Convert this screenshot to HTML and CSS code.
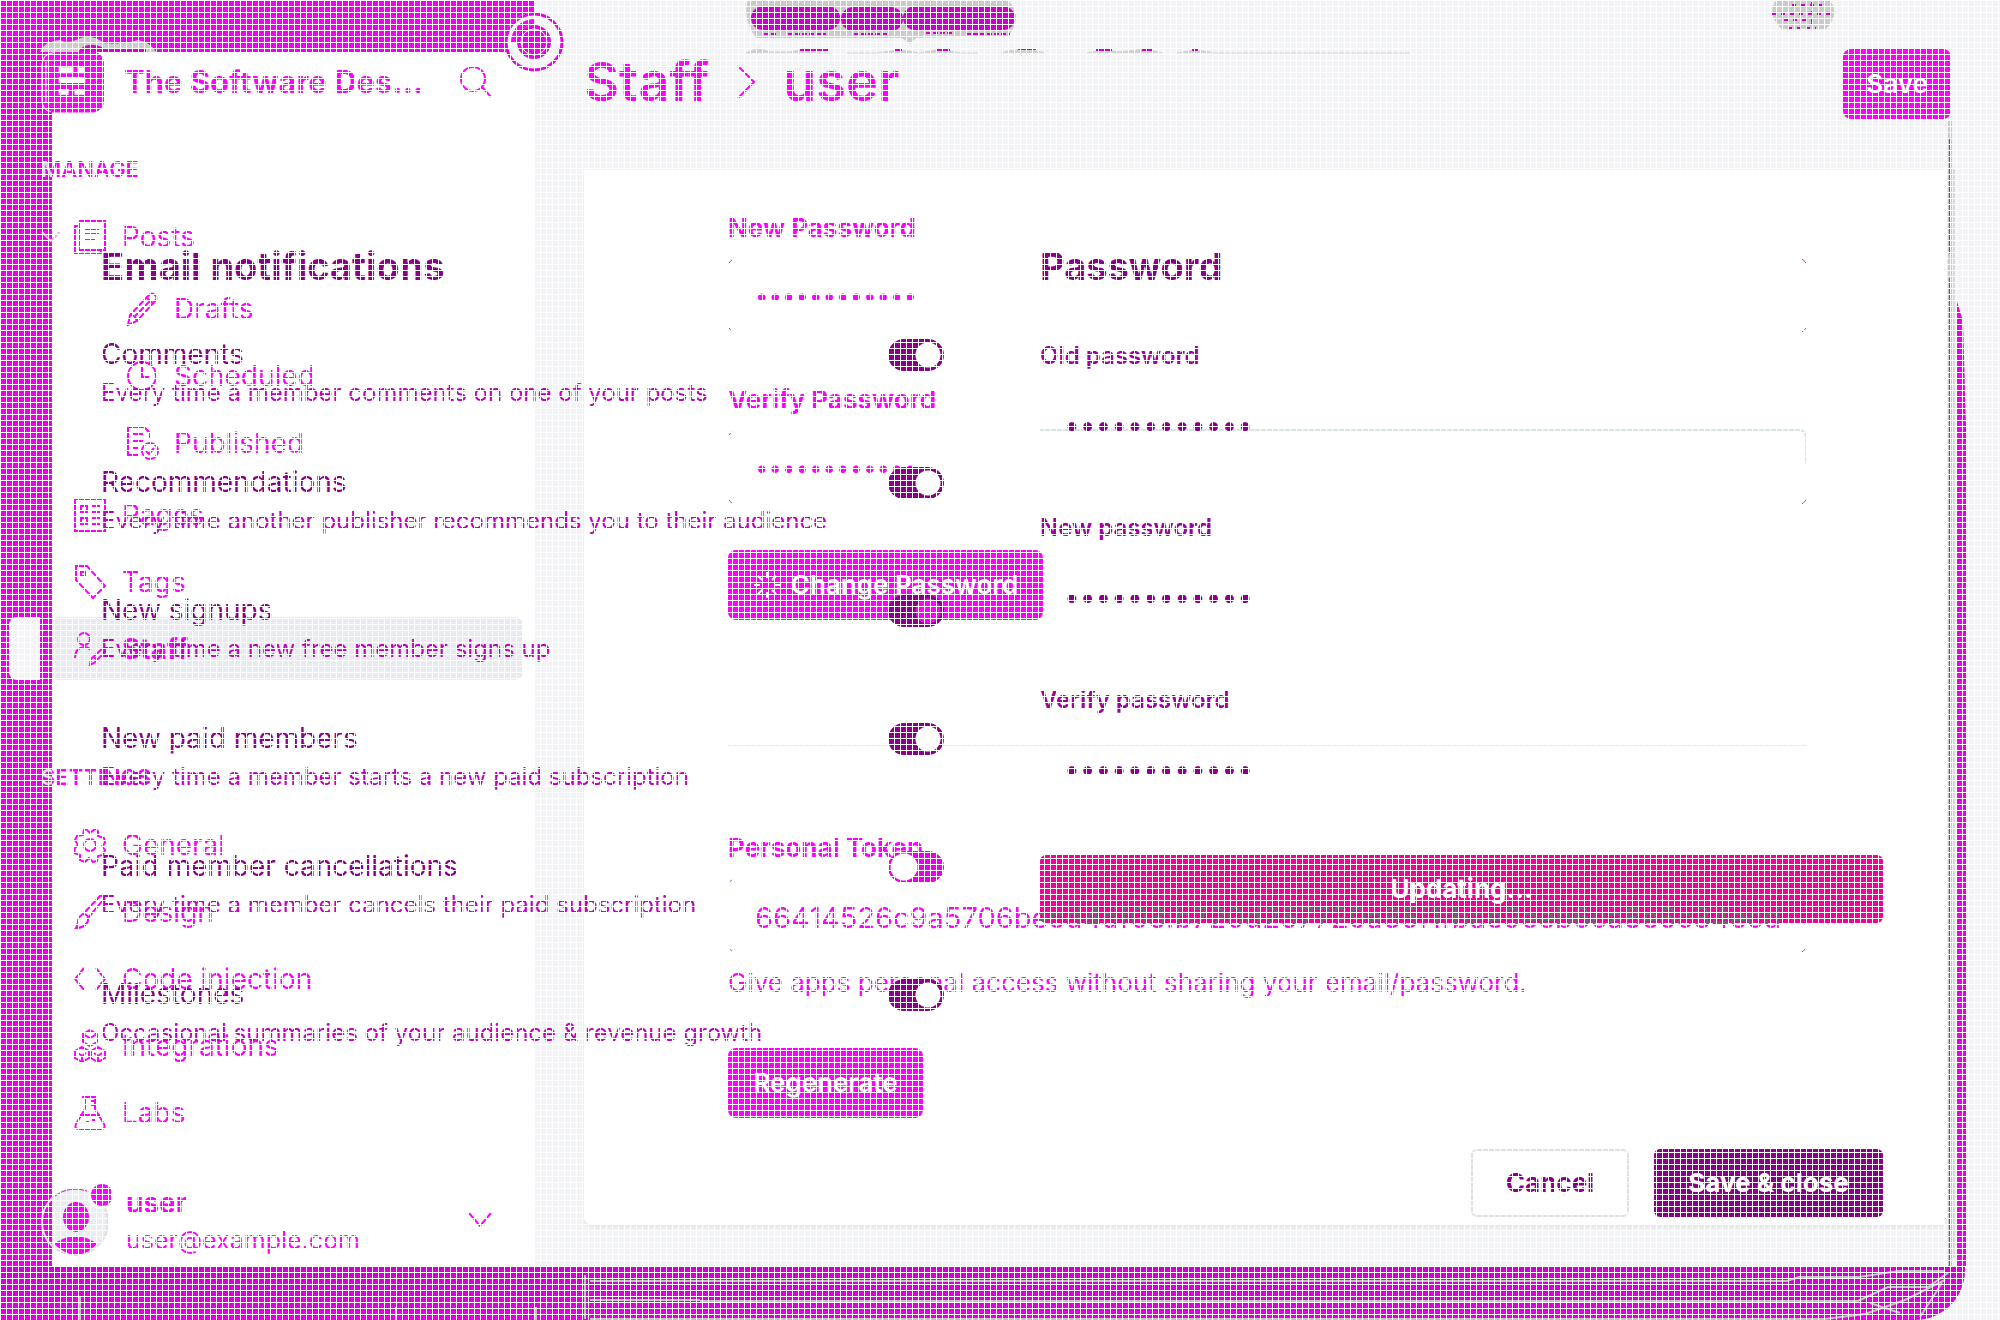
FILE: index.html
```html
<!DOCTYPE html>
<html lang="en">
<head>
<meta charset="utf-8">
<title>Staff - user</title>
<link rel="stylesheet" href="styles.css">
</head>
<body>
<div class="page">
  <aside class="sidebar">
    <header class="brand">
      <svg class="logo" viewBox="0 0 64 62"><rect width="64" height="62" rx="12" fill="#f0f"/><path d="M14 1Q1 2 1 14v34q0 12 9 13M5 10v42" stroke="#fff"/><path d="M18 19h15M37 19h7M18 29h27M18 41h10M34 41h10" stroke="#fff" stroke-width="6"/></svg>
      <strong class="brand-name">The Software Des...</strong>
      <button class="plain" aria-label="Search"><svg class="search" viewBox="0 0 32 32"><circle cx="13" cy="13" r="12"/><path d="M22 21l9 10"/></svg></button>
    </header>
    <h2 class="group">MANAGE</h2>
    <nav class="nav">
      <a href="#" class="item"><svg class="caret" viewBox="0 0 20 12"><path d="M1 1l9 9 9-9"/></svg><svg class="icon" viewBox="0 0 32 34"><path d="M5 1h26v29H5zM5 6H1v27h26v-3M10 9h15M10 14h15M10 20h11"/></svg>Posts</a>
      <div class="sub">
        <a href="#" class="item"><svg class="icon" viewBox="0 0 32 34"><path d="M3 23L22 3q3-3 6 0t0 6L10 29l-9 4zM3 23q5 0 7 6M20 6l7 6M8 24L24 8"/></svg>Drafts</a>
        <a href="#" class="item"><svg class="icon" viewBox="0 0 32 34"><circle cx="15" cy="17" r="14"/><path d="M15 8v10h7"/></svg>Scheduled</a>
        <a href="#" class="item"><svg class="icon" viewBox="0 0 32 34"><path d="M11 29H1V1h16l6 6v6M5 8h11M5 15h11M5 22h6"/><circle cx="23" cy="25" r="8"/><path d="M19 25l3 3 5-6"/></svg>Published</a>
      </div>
      <a href="#" class="item"><svg class="icon" viewBox="0 0 32 34"><path d="M1 1h30v32H1zM7 8h6v6H7zM18 8h8M18 14h8M7 20h6v6H7zM18 20h8M18 26h8"/></svg>Pages</a>
      <a href="#" class="item"><svg class="icon" viewBox="0 0 32 34"><path d="M2 1h11l18 20-12 12L2 15zM7 7h4v4H7z"/></svg>Tags</a>
      <a href="#" class="item active"><svg class="icon" viewBox="0 0 32 34"><circle cx="10" cy="7" r="6"/><path d="M1 26q0-10 9-11 4 0 7 3M16 33l1-6 12-11 3 3-12 12zM20 25l3 3"/></svg>Staff</a>
    </nav>
    <h2 class="group settings">SETTINGS</h2>
    <nav class="nav">
      <a href="#" class="item"><svg class="icon" viewBox="0 0 32 34"><circle cx="16" cy="17" r="6"/><path d="M12 1l4 4 5-4 3 2v5l6 2 1 5-3 3 3 4-2 5-5 1-1 5-4 1-4-4-4 4-5-2v-5l-6-2 1-5 3-3-3-5 2-4 6-1 1-5z"/></svg>General</a>
      <a href="#" class="item"><svg class="icon" viewBox="0 0 32 34"><path d="M9 19L26 1h4v3L14 23M9 19q6 0 5 7-3 7-12 7 2-3 2-7t5-7"/></svg>Design</a>
      <a href="#" class="item"><svg class="icon" viewBox="0 0 32 34"><path d="M10 6L1 17l9 11M22 6l9 11-9 11"/></svg>Code injection</a>
      <a href="#" class="item"><svg class="icon" viewBox="0 0 32 34"><path d="M16 1l7 4v8l-7 4-7-4V5zM9 5l7 4 7-4M8 18l7 4v7l-7 4-7-4v-7zM24 18l7 4v7l-7 4-7-4v-7zM4 24l4 3 4-3M8 27v6M20 24l4 3 4-3M24 27v6"/></svg>Integrations</a>
      <a href="#" class="item"><svg class="icon" viewBox="0 0 32 34"><path d="M8 1h15M11 1v12L2 28q-2 5 3 5h22q5 0 3-5l-9-15V1M6 19h20M16 5h5M16 9h5M12 26h3M18 24h3"/></svg>Labs</a>
    </nav>
    <footer class="account">
      <svg class="avatar" viewBox="0 0 70 72"><circle cx="34" cy="38" r="33" fill="#e8ecf3"/><path d="M11 14a33 33 0 0 0 0 48z" fill="#e800e8"/><circle cx="34" cy="38" r="33" stroke="#ddd" stroke-width="2"/><path d="M14 12a33 33 0 0 1 32-5" stroke="#f0f"/><ellipse cx="35" cy="33" rx="13" ry="15" fill="#f0f"/><path d="M13 60q22-16 43 0-20 22-43 0z" fill="#f0f"/><circle cx="60" cy="12" r="13" fill="#fff"/><circle cx="61" cy="11" r="11" fill="#f0f"/></svg>
      <div class="who"><strong>user</strong><span>user@example.com</span></div>
      <button class="plain" aria-label="Account menu"><svg class="down" viewBox="0 0 24 16"><path d="M1 1l11 13L23 1"/></svg></button>
    </footer>
    <svg class="ring" viewBox="0 0 60 60"><circle cx="30" cy="30" r="28" fill="#f3f4f7" stroke="#fff" stroke-width="3"/><path d="M7 30a23 23 0 0 1 23-23v6a17 17 0 0 0-17 17z" fill="#f0f"/><circle cx="30" cy="30" r="28" stroke="#e800e8" stroke-width="3"/><circle cx="30" cy="30" r="17" fill="#e800e8"/><circle cx="30" cy="30" r="13" stroke="#fff"/></svg>
    <svg class="puff" viewBox="0 0 116 16"><path d="M0 16Q4 5 20 4 26 8 36 4 50-4 64 7 82 9 98 4q12 2 18 12z" fill="#ccc"/><path d="M38 16q8-12 26-4h42v4z" fill="#d400d4"/></svg>
  </aside>

  <main class="main">
    <header class="topbar">
      <h1 class="crumbs"><a href="#">Staff</a><svg class="sep" viewBox="0 0 18 34"><path d="M1 1l16 16L1 33"/></svg><span>user</span></h1>
      <button class="button save">Save</button>
    </header>
    <form class="card">
      <label for="np">New Password</label>
      <div class="field"><input id="np" type="password" value="abcdefghijkl"></div>
      <label class="next" for="vp">Verify Password</label>
      <div class="field lined"><input id="vp" type="password" value="abcdefghijkl"></div>
      <button type="button" class="button change"><svg class="spin" viewBox="0 0 28 28"><path d="M14 1v6M14 21v6M1 14h6M21 14h6M5 5l4 4M19 19l4 4M5 23l4-4M19 9l4-4"/></svg>Change Password</button>
      <hr>
      <label for="token">Personal Token</label>
      <div class="field token"><input id="token" type="text" value="66414526c9a5706becd4df08:b720d257729a85f1fbae9eeb6ca8e6c34ecd"></div>
      <p class="help">Give apps personal access without sharing your email/password.</p>
      <button type="button" class="button regen">Regenerate</button>
    </form>
  </main>
  <div class="floor"><svg class="cracks" viewBox="0 0 1965 53" preserveAspectRatio="none"><path d="M590 14H1787l12-4h60l40-6h45M590 33H700M700 34H1768h90l30-14h40l20-14M590 52H1825l40-5 40-14 40-20M585 8v44M536 40v13M80 30v23M1870 36l30 10M1920 50l22-34M396 40v13"/></svg></div>
</div>

<svg class="edge" viewBox="0 0 18 1200" preserveAspectRatio="none"><path d="M2 0V1200" stroke="#c8c8c8" stroke-width="4"/><path d="M2 20V140M2 165V1200" stroke="#e800e8" stroke-width="2"/><path d="M6 50V1190" stroke="#d8d8d8" stroke-width="2"/><path d="M9 190l6 20 3 110V1200H8z" fill="#e800e8"/></svg>
<svg class="smear" viewBox="0 0 664 54"><path d="M2 0h260q16 18 0 36l-92 2-6 6-8-6H10Q-4 18 2 0z" fill="#cacaca"/><rect x="5" y="6" width="89" height="24" rx="12" fill="#c0c"/><rect x="95" y="7" width="62" height="24" rx="12" fill="#c0c"/><rect x="157" y="6" width="112" height="24" rx="12" fill="#c0c"/><path d="M18 34h14M42 34h38M108 34h34M180 33h26M220 34h44" stroke="#d000d0" stroke-width="2" stroke-dasharray="5 2"/><path d="M0 53l12-5 12 4h20l14-3 16 4h10M100 53h30l24-3 20 3 20-4 20 4h18M255 53q20-7 44 0M340 53l20-3 12 2 28-3 16 4M430 53l20-3 20 3h194" fill="#d0d0d0" stroke="#d0d0d0"/><path d="M54 50h28M148 50h8M190 50h14M272 49h18M350 50h16M396 50h10M446 50h6" stroke="#d000d0" stroke-width="2"/></svg>
<svg class="smudge" viewBox="0 0 62 30"><path d="M4 0h54q10 15-4 29H10Q-6 15 4 0z" fill="#cacaca"/><path d="M0 14h62M12 20h28M20 5h30M16 28h28M40 2v22" stroke="#d000d0" stroke-width="2" stroke-dasharray="4 5"/></svg>

<section class="modal">
  <div class="column">
    <h2>Email notifications</h2>
    <label class="row"><span><b>Comments</b><small>Every time a member comments on one of your posts</small></span><input type="checkbox" checked></label>
    <label class="row"><span><b>Recommendations</b><small>Every time another publisher recommends you to their audience</small></span><input type="checkbox" checked></label>
    <label class="row"><span><b>New signups</b><small>Every time a new free member signs up</small></span><input class="through" type="checkbox" checked></label>
    <label class="row"><span><b>New paid members</b><small>Every time a member starts a new paid subscription</small></span><input type="checkbox" checked></label>
    <label class="row"><span><b>Paid member cancellations</b><small>Every time a member cancels their paid subscription</small></span><input type="checkbox"></label>
    <label class="row"><span><b>Milestones</b><small>Occasional summaries of your audience &amp; revenue growth</small></span><input type="checkbox" checked></label>
  </div>
  <form class="column">
    <h2>Password</h2>
    <label for="p1">Old password</label><input id="p1" type="password" value="abcdefghijkl">
    <label for="p2">New password</label><input id="p2" type="password" value="abcdefghijkl">
    <label for="p3">Verify password</label><input id="p3" type="password" value="abcdefghijkl">
    <button type="button" class="updating">Updating...</button>
    <div class="actions"><button type="button" class="cancel">Cancel</button><button type="button" class="close">Save &amp; close</button></div>
  </form>
</section>
<div class="mesh"></div>
</body>
</html>
```

FILE: styles.css
```css
* { box-sizing: border-box; }
body { margin: 0; position: relative; background: #f2f3f6; color: #f0f; font: 26px/30px Inter, "Liberation Sans", sans-serif; overflow-x: hidden; }
h1, h2, p { margin: 0; }
a { color: inherit; text-decoration: none; }
button, input { font: inherit; }
svg { flex: none; display: block; fill: none; stroke: none; }
.plain { border: 0; padding: 0; background: none; }
.search, .icon, .caret, .down, .sep, .spin { stroke: #f0f; stroke-width: 2; }

.page { display: grid; grid-template-columns: 534px 1fr; grid-template-rows: 1fr 53px; min-height: 100vh; }

.sidebar { position: relative; display: flex; flex-direction: column; padding: 52px 11px 0 9px;
  background: linear-gradient(#f000f0, #f000f0) 0 0 / 100% 52px no-repeat, linear-gradient(#e800e8, #e800e8) 0 0 / 52px 100% no-repeat, #fff; }
.brand { display: flex; align-items: center; height: 60px; padding: 0 31px 0 32px; }
.logo { width: 63px; height: 62px; }
.brand-name { flex: 1; margin-left: 20px; font-size: 31px; line-height: 36px; font-weight: 700; white-space: nowrap; }
.search { width: 32px; height: 32px; }
.group { margin: 42px 0 0 32px; font-size: 22px; line-height: 30px; font-weight: 600; color: transparent; background: linear-gradient(90deg, #ddd 11px, #f0f 11px); background-clip: text; -webkit-background-clip: text; }
.nav { margin-top: 19px; font-size: 28px; }
.item { display: flex; align-items: center; gap: 16px; height: 67px; padding-left: 65px; position: relative; border-radius: 8px; }
.item .icon { width: 32px; height: 36px; }
.caret { position: absolute; left: 32px; width: 20px; height: 12px; stroke: #f0aaf0; }
.sub { padding: 5px 0 5px 53px; }
.sub .item { gap: 15px; }
.active { height: 63px; margin: 2px 0; font-weight: 700; background: linear-gradient(90deg, #f3f4f7 31px, #e800e8 31px, #e800e8 43px, #e8eaf1 43px); }
.settings { margin-top: 80px; }
.account { display: flex; align-items: center; margin: 37px 31px 0 32px; }
.avatar { width: 70px; height: 72px; }
.who { flex: 1; display: grid; gap: 5px; margin: 4px 0 0 15px; font-size: 25px; line-height: 32px; }
.who strong { font-size: 28px; }
.down { width: 24px; height: 16px; }
.ring { position: absolute; z-index: 1; right: -30px; top: 12px; width: 60px; height: 60px; }
.puff { position: absolute; left: 40px; top: 36px; width: 116px; height: 16px; }

.main { display: flex; flex-direction: column; padding: 0 53px 42px 50px; }
.topbar { display: flex; justify-content: space-between; align-items: flex-start; height: 170px; padding-top: 49px; margin-right: -4px; }
.crumbs { display: flex; align-items: center; gap: 28px; font-size: 54px; line-height: 66px; font-weight: 600; }
.sep { width: 18px; height: 34px; }
.button { display: flex; align-items: center; justify-content: center; height: 70px; padding: 0; border: 0; border-radius: 8px; background: #f0f; color: #fff; font-weight: 600; }
.save { width: 108px; }
.card { flex: 1; display: flex; flex-direction: column; align-items: stretch; padding: 43px 140px 0 144px; background: #fff; border-radius: 0 0 8px 8px; box-shadow: 0 2px 4px #0001; }
.card label { font-weight: 700; }
.card .next { margin-top: 52px; }
.field { position: relative; margin-top: 15px; height: 75px; }
.field input { width: 100%; height: 75px; padding: 0 27px; border: 0; background: none; color: #f0f; font-size: 24px; }
.field::after { content: ""; position: absolute; inset: 0; border: 1px solid #f0f; border-radius: 8px; pointer-events: none;
  mask: linear-gradient(#000, #000) 0 0 / 5px 5px no-repeat, linear-gradient(#000, #000) 100% 0 / 5px 5px no-repeat, linear-gradient(#000, #000) 0 100% / 5px 5px no-repeat, linear-gradient(#000, #000) 100% 100% / 5px 5px no-repeat; }
.lined::before { content: ""; position: absolute; z-index: 1; inset: -1px 0 auto 312px; height: 33px; border: solid #d7e5e8; border-width: 2px 2px 0 0; border-radius: 0 8px 0 0; pointer-events: none; }
.change { align-self: flex-start; width: 315px; margin-top: 45px; gap: 10px; }
.spin { width: 28px; height: 28px; stroke: #fff; }
hr { width: 100%; margin: 125px 0 87px; border: 0; border-top: 1px solid #e8eaec; }
.token { z-index: 3; }
.token input { padding-top: 4px; font-size: 29px; color: transparent; background: linear-gradient(#666, #666) 312px 0 / 100% 45px no-repeat, #f0f; background-clip: text; -webkit-background-clip: text; }
.help { margin-top: 15px; }
.regen { align-self: flex-start; width: 195px; margin-top: 50px; }

.floor { grid-column: 1 / -1; margin-right: 35px; background: linear-gradient(#d000d0, #e400e4); border-radius: 0 0 50px 0; }
.cracks { width: 100%; height: 53px; stroke: #c4c4c4; stroke-width: 2; }
.edge { position: absolute; right: 34px; top: 120px; width: 18px; height: calc(100% - 173px); }
.smear { position: absolute; left: 746px; top: 0; width: 664px; height: 54px; }
.smudge { position: absolute; right: 166px; top: 0; width: 62px; height: 30px; }

.modal { position: absolute; z-index: 2; inset: 0; display: grid; grid-template-columns: 1fr 1fr; gap: 96px; padding: 242px 117px 0 101px; color: #8b008b; }
.modal h2 { font-size: 38px; line-height: 48px; font-weight: 700; }
.row { display: flex; justify-content: space-between; height: 128px; }
.modal h2 + .row { margin-top: 46px; }
.row span { display: grid; align-content: start; gap: 6px; white-space: nowrap; }
.row b { font-size: 28px; line-height: 36px; font-weight: 400; }
.row small { font-size: 24px; line-height: 30px; color: #c000c0; }
.row input { appearance: none; flex: none; width: 56px; height: 32px; margin: 3px 0 0; border-radius: 16px; background: radial-gradient(circle at 40px 16px, #fff 12px, #8b008b 13px); }
.row input:not(:checked) { background: radial-gradient(circle at 16px 16px, #fff 13px, #e800e8 14px); }
.row .through { background: radial-gradient(circle at 40px 16px, #f0f 12px, #8b008b 13px); }
form.column { display: flex; flex-direction: column; }
form.column label { margin-top: 51px; font-size: 24px; font-weight: 600; color: #a000a0; }
form.column input { height: 70px; margin-top: 21px; padding: 0 24px 4px; border: 0; background: none; color: #8b008b; font-size: 28px; }
.modal button { height: 68px; padding: 0; border-radius: 6px; border: 0; color: #fff; font-weight: 700; }
.modal .updating { margin-top: 49px; background: #f20097; }
.actions { display: flex; justify-content: flex-end; gap: 25px; margin-top: 226px; }
.modal .cancel { width: 158px; border: 2px solid #e0e0e0; background: #fff; color: #8b008b; }
.modal .close { width: 229px; background: #8b008b; }

.mesh { position: absolute; z-index: 4; inset: 0; pointer-events: none; background: repeating-linear-gradient(#fff 0 1px, transparent 1px 6px), repeating-linear-gradient(90deg, #fff 0 1px, transparent 1px 6px); }
```
